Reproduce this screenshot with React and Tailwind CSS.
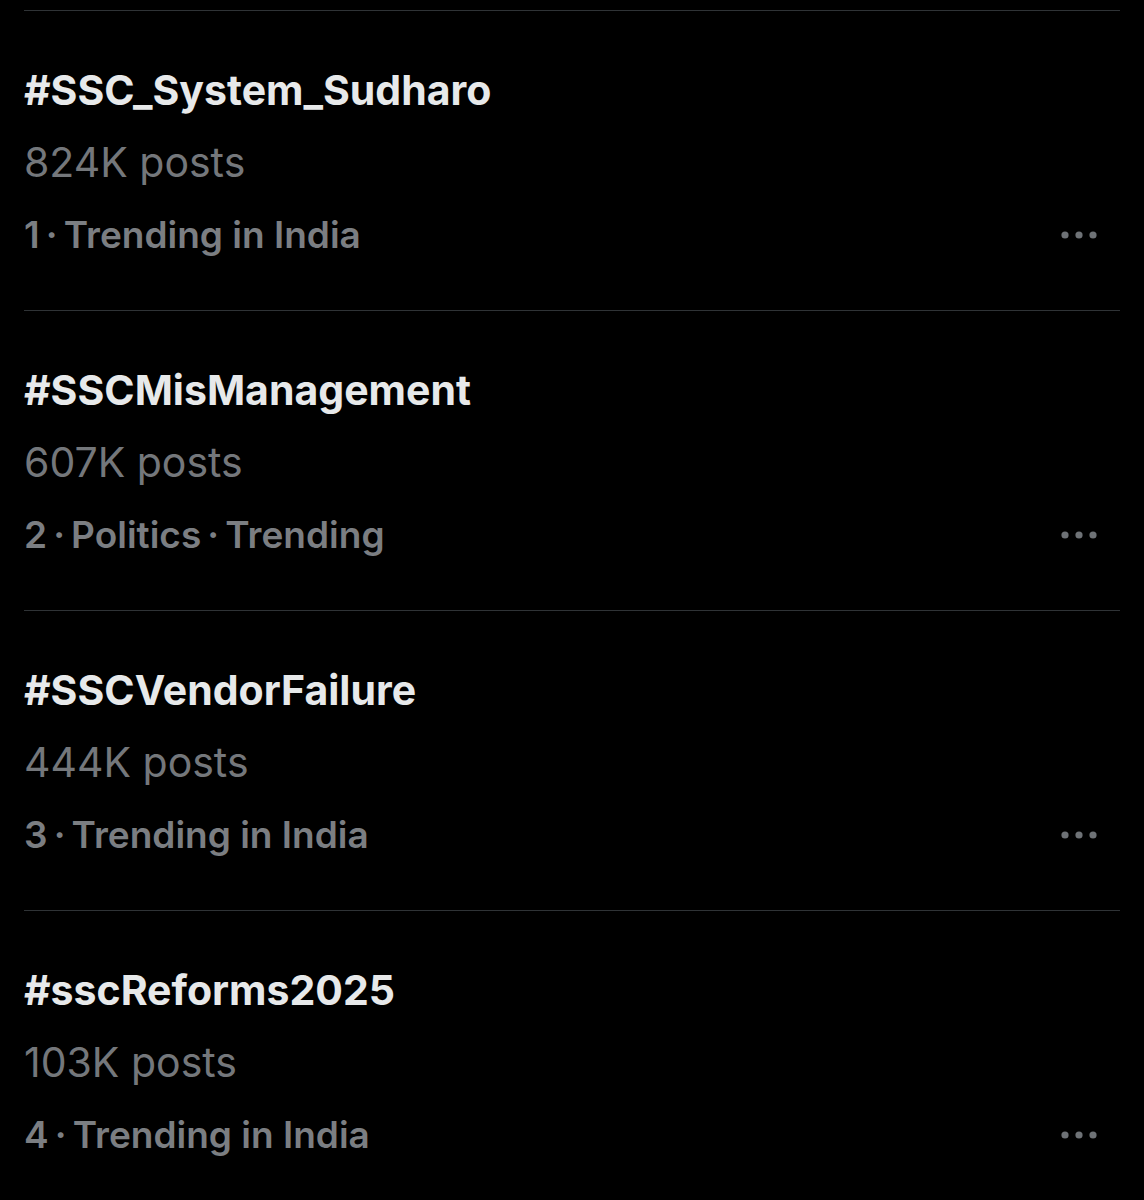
import React from "react";

const items = [
  { tag: "#SSC_System_Sudharo", posts: "824K posts", meta: ["1", "Trending in India"] },
  { tag: "#SSCMisManagement", posts: "607K posts", meta: ["2", "Politics", "Trending"] },
  { tag: "#SSCVendorFailure", posts: "444K posts", meta: ["3", "Trending in India"] },
  { tag: "#sscReforms2025", posts: "103K posts", meta: ["4", "Trending in India"] },
];

function Dots() {
  return (
    <svg width="36" height="8" viewBox="0 0 36 8" className="block">
      <circle cx="4" cy="4" r="3.6" fill="#6e7276" />
      <circle cx="18" cy="4" r="3.6" fill="#6e7276" />
      <circle cx="32" cy="4" r="3.6" fill="#6e7276" />
    </svg>
  );
}

export default function App() {
  return (
    <div
      className="w-[1144px] h-[1200px] bg-black overflow-hidden pt-[10px]"
      style={{ fontFamily: "Inter, 'Noto Sans', sans-serif" }}
    >
      {items.map((it) => (
        <div key={it.tag} className="ml-[24px] mr-[24px] border-t border-[#2f3336] pt-[44px] pb-[39px]">
          <div className="h-[72px] flex items-center text-[41px] font-bold text-[#e7e9ea] tracking-[0px]">
            {it.tag}
          </div>
          <div className="h-[72px] flex items-center text-[41px] font-normal text-[#74777b]">
            {it.posts}
          </div>
          <div className="h-[72px] flex items-center justify-between pr-[23px]">
            <span className="text-[37px] font-semibold text-[#7b7e82]">
              {it.meta.join("\u2009·\u2009")}
            </span>
            <Dots />
          </div>
        </div>
      ))}
    </div>
  );
}
